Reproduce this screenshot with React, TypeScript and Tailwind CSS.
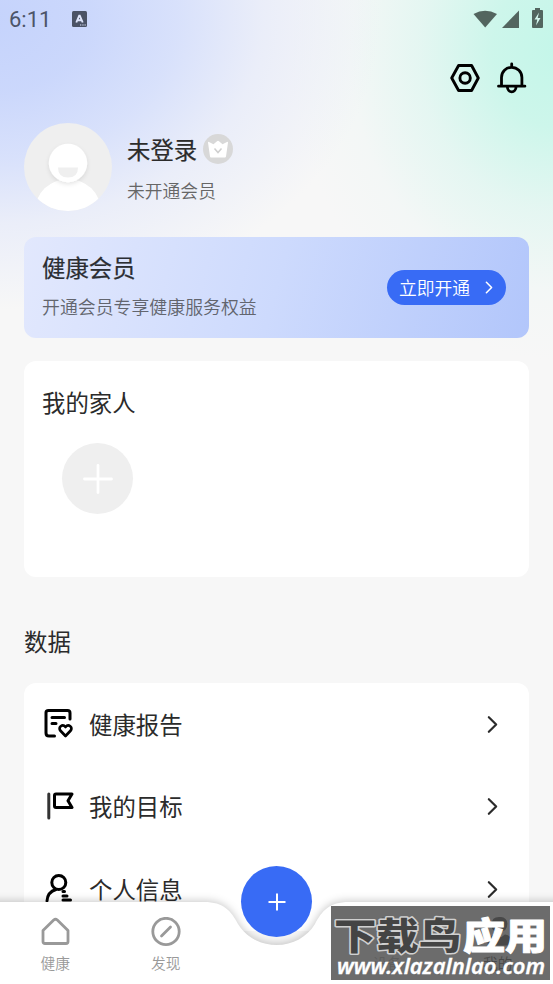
import type { ReactNode } from "react";

const Chevron = ({ className }: { className: string }) => (
  <svg viewBox="0 0 12 20" fill="none" stroke="currentColor" className={className}>
    <path d="M2 2l8 8-8 8" strokeWidth="2.4" strokeLinecap="round" strokeLinejoin="round" />
  </svg>
);

const StatusBar = () => (
  <div className="flex h-[38px] shrink-0 items-center justify-between pr-[9px] pl-[9px] text-[#4c5468]">
    <div className="flex items-center">
      <span className="w-[63px] pt-px font-[Roboto] text-[22px] leading-[38px]">6:11</span>
      <svg className="h-4 w-[15px]" viewBox="0 0 15 16">
        <rect width="15" height="16" rx="1.5" fill="#4b5365" />
        <path d="M4.300 11.500L7.200 4.600h.6l2.900 6.900M5.600 9.300h3.800" fill="none" stroke="#dfe6fb" strokeWidth="1.900" />
        <path d="M8 14h1.300M10.300 14h1.300M12.500 14h1.300" stroke="#dfe6fb" strokeWidth="1.200" />
      </svg>
    </div>
    <svg className="h-[22px] w-[72px]" viewBox="0 0 72 22" fill="#53655f">
      <path d="M1.500 6Q13-.5 25 6L13.200 19.500z" />
      <path d="M47 2.500v17.500H30z" />
      <path d="M61 2h2V0h5v2h2q1 0 1 1v16q0 1-1 1h-9q-1 0-1-1V3q0-1 1-1z" />
      <path d="M67 4.500l-4.500 7h2.800L64 17.500l4.500-7.500h-2.800z" fill="#d5f7ee" />
    </svg>
  </div>
);

const HeaderActions = () => (
  <div className="flex h-20 shrink-0 items-center justify-end gap-[15px] pr-[25px]">
    <svg className="h-8 w-8" viewBox="0 0 32 32" fill="none" stroke="#000" strokeWidth="2.900">
      <path d="M9.600 3.500h13L29.300 16l-6.700 12.500h-13L2.700 16z" strokeLinejoin="round" />
      <circle cx="16.100" cy="16" r="5.200" />
    </svg>
    <svg className="h-8 w-8" viewBox="0 0 32 32" fill="none" stroke="#000" strokeWidth="2.800">
      <path d="M15.700 2v3M5.500 24V15.500a10.200 10.200 0 0 1 20.400 0V24M2.500 24.200h26.400" strokeLinecap="round" />
      <path d="M11.400 25a4.300 4.800 0 0 0 8.600 0" />
    </svg>
  </div>
);

const Profile = () => (
  <div className="flex h-[98px] shrink-0 items-start gap-[15px]">
    <svg className="mt-[5px] h-[88px] w-[88px]" viewBox="0 0 88 88">
      <defs>
        <clipPath id="avatar">
          <circle cx="44" cy="44" r="44" />
        </clipPath>
        <filter id="soft" x="-30%" y="-30%" width="160%" height="160%">
          <feDropShadow dx="0" dy="2" stdDeviation="2" floodColor="#000" floodOpacity="0.1" />
        </filter>
      </defs>
      <g clipPath="url(#avatar)">
        <rect width="88" height="88" fill="#efefef" />
        <ellipse cx="44" cy="88" rx="33" ry="32" fill="#fff" />
        <circle cx="44" cy="40" r="19.200" fill="#fff" filter="url(#soft)" />
        <path d="M34 44.500h20q0 10-10 10t-10-10z" fill="#efefef" />
      </g>
    </svg>
    <div className="pt-[13px]">
      <div className="flex items-center gap-[6px]">
        <span className="text-[#2b2b2b] text-[23.400px] leading-9 [-webkit-text-stroke:0.2px_#2b2b2b]">未登录</span>
        <svg className="h-[30px] w-[30px]" viewBox="0 0 30 30">
          <circle cx="15" cy="15" r="15" fill="#d8d8d8" />
          <path
            d="M5 8.500q0-1 1-.5l4.500 2.200L14 7.300q1-1 2 0l3.500 2.900L24 8q1-.5 1 .5l-2 14q-.2 1-1 1H8q-.8 0-1-1z"
            fill="#fff"
          />
          <path d="M11.500 14.500l3.500 4 3.500-4" fill="none" stroke="#cfcfcf" strokeWidth="1.500" />
        </svg>
      </div>
      <p className="mt-[9px] font-[350] text-[#666] text-[17.800px] leading-7">未开通会员</p>
    </div>
  </div>
);

const MemberCard = () => (
  <div className="mt-[21px] flex h-[101px] shrink-0 items-center justify-between rounded-xl bg-linear-[105deg,#e2e8fd,#cddafd_50%,#b2c6fb] pr-[23px] pl-[18px]">
    <div className="pb-[7px]">
      <h2 className="text-[#2b2e33] text-[23.400px] leading-9 [-webkit-text-stroke:0.2px_#2b2e33]">健康会员</h2>
      <p className="mt-[7px] font-[350] text-[#62656e] text-[17.900px] leading-7">开通会员专享健康服务权益</p>
    </div>
    <button className="flex h-[35px] w-[119px] items-center justify-between rounded-full bg-[#386bf5] pr-[13px] pl-3 font-[350] text-[17.800px] text-white">
      立即开通
      <Chevron className="h-[13px] w-[8px]" />
    </button>
  </div>
);

const FamilyCard = () => (
  <div className="mt-[23px] h-[216px] shrink-0 rounded-xl bg-white px-[18px] pt-[23px]">
    <h2 className="text-[#2b2b2b] text-[23.400px] leading-9">我的家人</h2>
    <div className="mt-[23px] ml-5 flex h-[71px] w-[71px] items-center justify-center rounded-full bg-[#efefef]">
      <svg className="h-[30px] w-[30px]" viewBox="0 0 30 30" stroke="#fff" strokeWidth="2.800" strokeLinecap="round">
        <path d="M15 1.500v27M1.500 15h27" />
      </svg>
    </div>
  </div>
);

const Row = ({ label, children }: { label: string; children: ReactNode }) => (
  <div className="flex h-[82.500px] items-center pr-[31px] pl-[18px] text-[#2b2b2b]">
    <svg
      className="mr-[15px] h-8 w-8"
      viewBox="0 0 32 32"
      fill="none"
      stroke="#000"
      strokeWidth="3"
      strokeLinecap="round"
      strokeLinejoin="round"
    >
      {children}
    </svg>
    <span className="flex-1 pb-px text-[23.400px] leading-9">{label}</span>
    <Chevron className="h-[19px] w-[11px]" />
  </div>
);

const DataList = () => (
  <div className="rounded-xl bg-white">
    <Row label="健康报告">
      <path d="M12.500 28H7q-3 0-3-3V4.500Q4 2.500 6.500 2.500h19q2.500 0 2.500 2.500V11" />
      <path d="M10 9.500h12.500M10 15.500h4" />
      <path d="M23.500 28l-5-5.200c-3-3.500 2-7.500 5-3.800 3-3.700 8 .3 5 3.800z" strokeWidth="2.700" />
    </Row>
    <Row label="我的目标">
      <path d="M6.800 3v24" stroke="#333" />
      <path d="M14 3h16l-4 6.700 4 6.800H14q-1.500 0-1.500-1.500V4.500Q12.500 3 14 3z" />
    </Row>
    <Row label="个人信息">
      <circle cx="16.800" cy="9.500" r="7" />
      <path d="M5 28q.5-9 9-11.500M21 18.500h1.500M21 23h4M21 27h7.500" />
    </Row>
  </div>
);

const Tab = ({ label, color, children }: { label: string; color: string; children: ReactNode }) => (
  <div className={`flex w-[110.500px] flex-col items-center ${color}`}>
    <svg
      className="h-[30px] w-[30px]"
      viewBox="0 0 30 30"
      fill="none"
      stroke="currentColor"
      strokeWidth="2.800"
      strokeLinecap="round"
      strokeLinejoin="round"
    >
      {children}
    </svg>
    <span className="mt-[6px] font-[350] text-[14.700px] leading-5">{label}</span>
  </div>
);

const TabBar = () => (
  <nav className="absolute bottom-0 left-0 h-[118px] w-full">
    <svg className="absolute inset-0 h-full w-full overflow-visible" viewBox="0 0 553 118">
      <path
        d="M-20 36H204C224 36 231 45 238 58 246 71 260 79 276.500 79S307 71 315 58C322 45 329 36 349 36H573V140H-20z"
        fill="#fff"
        className="drop-shadow-[0_-1px_4px_rgba(0,0,0,0.22)]"
      />
    </svg>
    <button className="absolute top-0 left-[241px] flex h-[71px] w-[71px] items-center justify-center rounded-full bg-[#386bf5]">
      <svg className="h-[18px] w-[18px]" viewBox="0 0 18 18" stroke="#fff" strokeWidth="2">
        <path d="M9 .5v17M.5 9h17" />
      </svg>
    </button>
    <div className="relative flex justify-between pt-[51px]">
      <div className="flex">
        <Tab label="健康" color="text-[#999]">
          <path d="M3 13.500L13.700 3q1.800-1.500 3.600 0L28 13.500V24.500q0 2-2 2H5q-2 0-2-2z" />
        </Tab>
        <Tab label="发现" color="text-[#999]">
          <circle cx="15" cy="14.500" r="13.200" />
          <path d="M10.500 19l9-9" />
        </Tab>
      </div>
      <div className="flex">
        <Tab label="设备" color="text-[#999]">
          <path d="M11 1h8M6 7h18v19H6z" />
        </Tab>
        <Tab label="我的" color="text-black">
          <path d="M16 1.500h2a5 5 0 0 1 5 5q0 7-7 7t-6-6q0-6 6-6zM6 27q0-8 8-8l4 3 4-3q6 1 6 8z" fill="#000" />
        </Tab>
      </div>
    </div>
  </nav>
);

const Watermark = () => (
  <div className="absolute top-[906px] left-[331px] h-[74px] w-[219px] bg-[#545454]/86">
    <svg className="h-full w-full overflow-visible" viewBox="0 0 219 74">
      <g fontFamily="Noto Sans CJK SC, sans-serif" fontWeight="900" fontSize="37" strokeLinejoin="round">
        <text
          x="3"
          y="44"
          textLength="127"
          lengthAdjust="spacingAndGlyphs"
          fill="#444"
          stroke="#d0d0d0"
          strokeWidth="3"
          paintOrder="stroke"
        >
          下载鸟
        </text>
        <text x="132" y="44" textLength="84" lengthAdjust="spacingAndGlyphs" fill="#fff" stroke="#fff" strokeWidth="1">
          应用
        </text>
      </g>
      <text
        x="6"
        y="68"
        textLength="208"
        lengthAdjust="spacingAndGlyphs"
        fontFamily="Noto Sans, sans-serif"
        fontSize="21"
        fontWeight="600"
        fontStyle="italic"
        fill="#fff"
        stroke="#fff"
        strokeWidth="0.300"
      >
        www.xlazalnlao.com
      </text>
    </svg>
  </div>
);

export default function App() {
  return (
    <div className="relative h-[984px] w-[553px] overflow-hidden bg-[#f7f7f7] font-['Noto_Sans_CJK_SC',sans-serif]">
      <div className="flex h-full flex-col overflow-hidden bg-[radial-gradient(ellipse_390px_290px_at_-10px_20px,#c5d3fc_0%,#c9d6fcf4_25%,#d4defce0_48%,#e4e9faaa_70%,#f7f7f700_100%),radial-gradient(ellipse_270px_310px_at_560px_50px,#c4f6e9_0%,#caf6eaee_25%,#dbf6efaa_52%,#ecf7f455_78%,#f7f7f700_100%)]">
        <StatusBar />
        <HeaderActions />
        <div className="flex flex-col px-6">
          <Profile />
          <MemberCard />
          <FamilyCard />
          <h2 className="mt-[46px] mb-6 text-[#2b2b2b] text-[23.400px] leading-9">数据</h2>
          <DataList />
        </div>
      </div>
      <TabBar />
      <Watermark />
    </div>
  );
}
